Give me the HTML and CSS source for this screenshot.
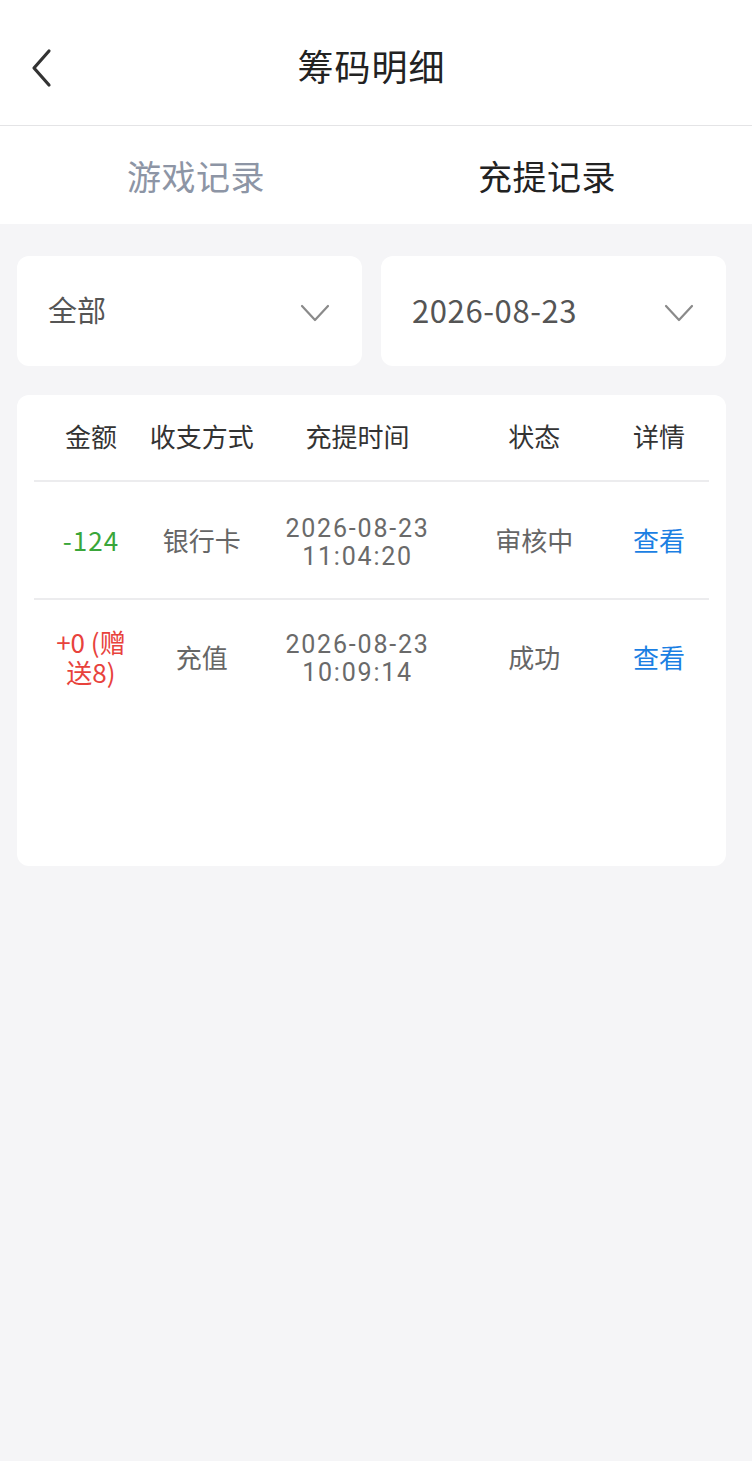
FILE: index.html
```html
<!DOCTYPE html>
<html lang="zh-CN">
<head>
<meta charset="utf-8">
<title>筹码明细</title>
<link rel="stylesheet" href="styles.css">
</head>
<body>
<div class="page">
  <header class="nav">
    <span class="back">
      <svg width="30" height="40" viewBox="0 0 30 40"><path d="M22 3 L7 20 L22 37" fill="none" stroke="#333" stroke-width="3.2" stroke-linecap="round" stroke-linejoin="round"/></svg>
    </span>
    <h1 class="title">筹码明细</h1>
  </header>
  <nav class="tabs">
    <div class="tab tab-left">游戏记录</div>
    <div class="tab tab-right active">充提记录</div>
  </nav>
  <section class="filters">
    <div class="select">
      <span class="select-text">全部</span>
      <svg class="chev" width="30" height="20" viewBox="0 0 30 20"><path d="M2 3 L15 17 L28 3" fill="none" stroke="#8a8a8a" stroke-width="2.2" stroke-linecap="round" stroke-linejoin="round"/></svg>
    </div>
    <div class="select">
      <span class="select-text date">2026-08-23</span>
      <svg class="chev" width="30" height="20" viewBox="0 0 30 20"><path d="M2 3 L15 17 L28 3" fill="none" stroke="#8a8a8a" stroke-width="2.2" stroke-linecap="round" stroke-linejoin="round"/></svg>
    </div>
  </section>
  <section class="card">
    <div class="row head">
      <div class="c c1">金额</div>
      <div class="c c2">收支方式</div>
      <div class="c c3">充提时间</div>
      <div class="c c4">状态</div>
      <div class="c c5">详情</div>
    </div>
    <div class="row item">
      <div class="c c1 minus">-124</div>
      <div class="c c2">银行卡</div>
      <div class="c c3 time"><div>2026-08-23</div><div>11:04:20</div></div>
      <div class="c c4">审核中</div>
      <div class="c c5 link">查看</div>
    </div>
    <div class="row item last">
      <div class="c c1 plus">+0 (赠送8)</div>
      <div class="c c2">充值</div>
      <div class="c c3 time"><div>2026-08-23</div><div>10:09:14</div></div>
      <div class="c c4">成功</div>
      <div class="c c5 link">查看</div>
    </div>
  </section>
</div>
</body>
</html>
```

FILE: styles.css
```css
* { box-sizing: border-box; }
html, body { margin: 0; padding: 0; }
body {
  background: #f5f5f7;
  font-family: "Noto Sans CJK SC", "Noto Sans", sans-serif;
  width: 752px;
  min-height: 1461px;
}
.page { width: 752px; }
.nav {
  height: 126px;
  background: #fff;
  border-bottom: 1px solid #e4e4e6;
  display: flex;
  align-items: center;
  justify-content: center;
  position: relative;
  padding: 4px 9px 0 0;
}
.back {
  position: absolute;
  left: 27px;
  top: 48px;
  width: 30px;
  height: 40px;
}
.back svg { display: block; }
.title {
  margin: 0;
  font-size: 36px;
  font-weight: 400;
  color: #222;
  letter-spacing: 1px;
}
.tabs {
  height: 98px;
  background: #fff;
  display: flex;
  align-items: center;
}
.tab {
  font-size: 34px;
  text-align: center;
  letter-spacing: 0.5px;
}
.tab-left { width: 392px; color: #8d95a5; }
.tab-right { width: 310px; color: #222; }
.filters {
  display: flex;
  gap: 19px;
  padding: 32px 26px 0 17px;
}
.select {
  flex: 1;
  height: 110px;
  background: #fff;
  border-radius: 12px;
  display: flex;
  align-items: center;
  justify-content: space-between;
  padding: 0 32px 4px 31px;
}
.select-text {
  font-size: 29px;
  color: #555;
}
.select-text.date {
  font-size: 31px;
  letter-spacing: 0.6px;
}
.chev { display: block; margin-top: 7px; }
.card {
  margin: 29px 26px 0 17px;
  height: 471px;
  background: #fff;
  border-radius: 12px;
  padding: 0 17px;
}
.row {
  display: flex;
  align-items: center;
  border-bottom: 2px solid #ececee;
}
.row.last { border-bottom: none; }
.head { height: 87px; padding-bottom: 3px; }
.item { height: 118px; }
.item.last { padding-bottom: 5px; }
.c {
  text-align: center;
  font-size: 26px;
  color: #666;
  line-height: 30px;
}
.head .c { color: #333; }
.c1 { width: 114px; padding: 0 16px; }
.c2 { width: 108px; }
.c3 { width: 204px; }
.c4 { width: 150px; }
.c5 { width: 100px; }
.time {
  font-family: Roboto, "Noto Sans CJK SC", sans-serif;
  font-size: 25px;
  line-height: 28px;
  color: #6a6a6a;
  letter-spacing: 1.8px;
  padding-top: 5px;
}
.minus { color: #3aa63a; letter-spacing: 1px; }
.plus { color: #e8423c; }
.link { color: #1b7fe3; }
```
